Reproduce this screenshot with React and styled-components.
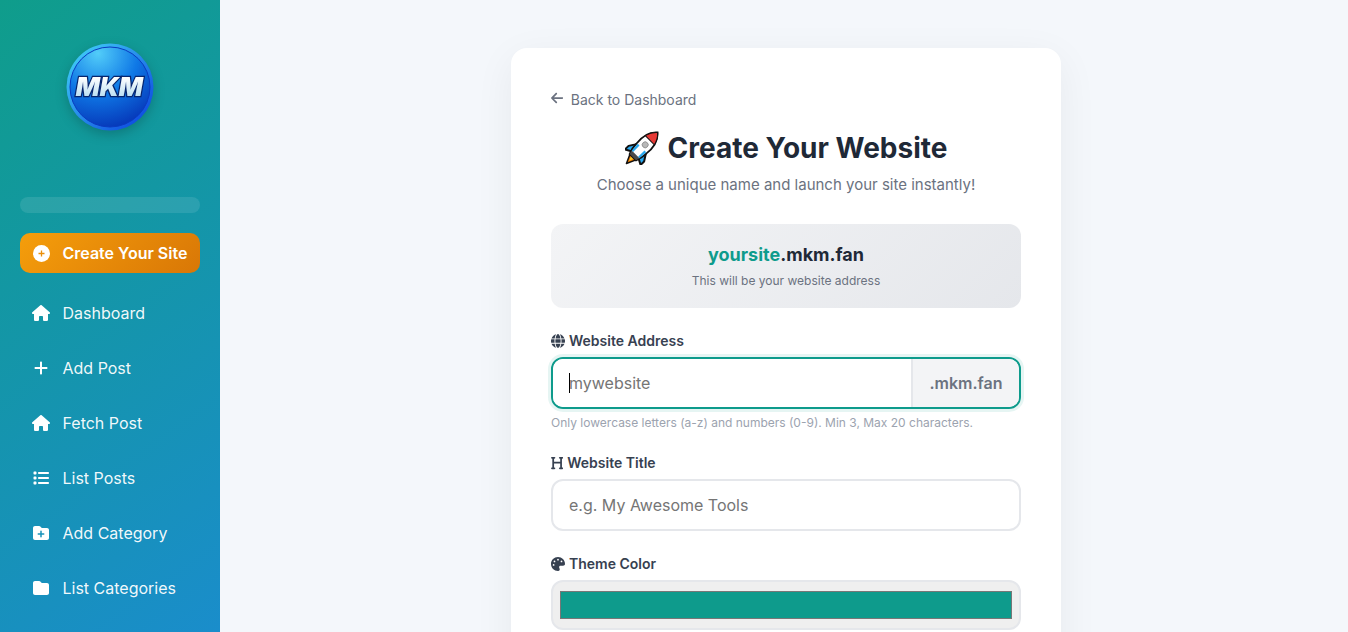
import React from "react";
import styled, { createGlobalStyle } from "styled-components";
import {
  FaArrowLeft,
  FaFolder,
  FaFolderPlus,
  FaGlobe,
  FaHeading,
  FaHouse,
  FaList,
  FaPalette,
  FaPlus,
} from "react-icons/fa6";

const GlobalStyle = createGlobalStyle`
  html, body {
    margin: 0;
    height: 100%;
    overflow: hidden;
  }
  * {
    box-sizing: border-box;
  }
  body {
    font-family: "Inter", "Liberation Sans", sans-serif;
    background: #f4f7fb;
  }
`;

const Layout = styled.div`
  display: flex;
  height: 100vh;
  overflow: hidden;
`;

const Sidebar = styled.aside`
  width: 220px;
  flex-shrink: 0;
  padding: 42px 20px 0;
  background: linear-gradient(145deg, #0f9d8b 0%, #1a8dcb 100%);
  display: flex;
  flex-direction: column;
`;

const LogoWrap = styled.div`
  display: flex;
  justify-content: center;
  height: 90px;
  margin-bottom: 65px;

  svg {
    filter: drop-shadow(0 4px 6px rgba(0, 0, 0, 0.2));
  }
`;

const SearchStub = styled.div`
  height: 16px;
  border-radius: 8px;
  background: rgba(255, 255, 255, 0.1);
  margin-bottom: 20px;
`;

const CreateButton = styled.a`
  height: 40px;
  display: flex;
  align-items: center;
  gap: 12.5px;
  padding: 0 13px;
  border-radius: 10px;
  color: #fff;
  font-size: 16px;
  font-weight: 600;
  white-space: nowrap;
  background: linear-gradient(135deg, #f59e0b, #d97706);
  margin-bottom: 12px;

  svg {
    flex-shrink: 0;
  }
`;

const NavList = styled.nav`
  display: flex;
  flex-direction: column;
`;

const NavItem = styled.a`
  height: 55px;
  display: flex;
  align-items: center;
  padding-left: 11px;
  color: rgba(255, 255, 255, 0.95);
  font-size: 16px;
  font-weight: 400;
`;

const NavIcon = styled.span`
  width: 20px;
  margin-right: 11.5px;
  display: flex;
  justify-content: center;
  color: #fff;

  svg {
    width: ${(props) => props.$width || 16}px;
    height: 16px;
  }
`;

const Main = styled.main`
  flex: 1;
  display: flex;
  justify-content: center;
  padding-top: 48px;
  padding-left: 4px;
`;

const Card = styled.section`
  width: 550px;
  height: 800px;
  flex-shrink: 0;
  background: #fff;
  border-radius: 16px;
  padding: 39px 40px 40px;
  box-shadow: 0 10px 40px rgba(0, 0, 0, 0.06);
`;

const BackLink = styled.a`
  display: flex;
  align-items: center;
  gap: 8px;
  height: 24px;
  color: #6b7280;
  font-size: 14px;
  margin-bottom: 17px;

  svg {
    width: 12.25px;
    height: 14px;
    margin-left: -0.5px;
    margin-top: -2px;
  }
`;

const Title = styled.h1`
  margin: 0 0 6px;
  height: 40px;
  display: flex;
  justify-content: center;
  align-items: center;
  gap: 9px;
  color: #1f2937;
  font-size: 28px;
  font-weight: 700;
  line-height: 40px;
`;

const Subtitle = styled.p`
  margin: 0 0 28px;
  text-align: center;
  color: #6b7280;
  font-size: 15px;
  line-height: 22px;
`;

const Preview = styled.div`
  height: 84px;
  border-radius: 12px;
  background: linear-gradient(135deg, #f3f4f6, #e5e7eb);
  display: flex;
  flex-direction: column;
  align-items: center;
  padding-top: 19px;
  margin-bottom: 24px;
`;

const PreviewName = styled.div`
  color: #1f2937;
  font-size: 18px;
  font-weight: 700;
  line-height: 24px;
  margin-bottom: 6px;
`;

const PreviewSub = styled.span`
  color: ${(props) => props.$accent || "inherit"};
`;

const PreviewHint = styled.div`
  color: #6b7280;
  font-size: 12px;
  line-height: 16px;
`;

const Field = styled.div`
  margin-bottom: ${(props) => props.$gap || 24}px;
`;

const Label = styled.label`
  display: flex;
  align-items: center;
  gap: 4px;
  height: 17px;
  margin-bottom: 8px;
  color: #374151;
  font-size: 14px;
  font-weight: 600;

  svg {
    width: ${(props) => props.$iconWidth || 14}px;
    height: 14px;
  }
`;

const AddressGroup = styled.div`
  position: relative;
  display: flex;
  height: 52px;
  border: 2px solid #0e9b8c;
  border-radius: 12px;
  overflow: hidden;
  box-shadow: 0 0 0 3px rgba(14, 155, 140, 0.1);
`;

const AddressInput = styled.input`
  flex: 1;
  min-width: 0;
  border: 0;
  outline: 0;
  padding: 0 16px;
  font-family: inherit;
  font-size: 16px;
  color: #1f2937;
  caret-color: transparent;
`;

const Caret = styled.span`
  position: absolute;
  left: 16px;
  top: 14px;
  width: 1px;
  height: 20px;
  background: #000;
`;

const Suffix = styled.div`
  width: 108px;
  display: flex;
  align-items: center;
  justify-content: center;
  background: #f3f4f6;
  border-left: 2px solid #e5e7eb;
  color: #6b7280;
  font-size: 16px;
  font-weight: 600;
`;

const Hint = styled.div`
  margin-top: 6px;
  color: #9ca3af;
  font-size: 12px;
  line-height: 16px;
`;

const TextInput = styled.input`
  display: block;
  width: 100%;
  height: 52px;
  border: 2px solid #e5e7eb;
  border-radius: 12px;
  outline: 0;
  padding: 0 16px;
  font-family: inherit;
  font-size: 16px;
  color: #1f2937;
`;

const ColorInput = styled.input`
  display: block;
  width: 100%;
  height: 50px;
  padding: 5px;
  border: 2px solid #e5e7eb;
  border-radius: 12px;
  background: #efefef;
`;

const navItems = [
  { label: "Dashboard", icon: <FaHouse />, width: 18 },
  { label: "Add Post", icon: <FaPlus />, width: 14 },
  { label: "Fetch Post", icon: <FaHouse />, width: 18 },
  { label: "List Posts", icon: <FaList /> },
  { label: "Add Category", icon: <FaFolderPlus /> },
  { label: "List Categories", icon: <FaFolder /> },
];

const CirclePlus = () => (
  <svg width="17" height="17" viewBox="0 0 17 17">
    <circle cx="8.500" cy="8.500" r="8.500" fill="#fff" />
    <path d="M8.500 5.500v6M5.500 8.500h6" stroke="#ea8f0a" strokeWidth="1.300" />
  </svg>
);

const Logo = () => (
  <svg width="90" height="90" viewBox="0 0 90 90">
    <defs>
      <linearGradient id="coinRim" x1="0.1" y1="0.1" x2="0.9" y2="0.9">
        <stop offset="0" stopColor="#3fcaf6" />
        <stop offset="1" stopColor="#0d4ae0" />
      </linearGradient>
      <radialGradient id="coinFace" cx="0.35" cy="0.08" r="1">
        <stop offset="0" stopColor="#52cdf9" />
        <stop offset="0.5" stopColor="#0f78e6" />
        <stop offset="1" stopColor="#0531b4" />
      </radialGradient>
      <linearGradient id="coinText" x1="0" y1="0" x2="0" y2="1">
        <stop offset="0.2" stopColor="#ffffff" />
        <stop offset="1" stopColor="#a9d6ee" />
      </linearGradient>
    </defs>
    <circle cx="45" cy="45" r="43.500" fill="url(#coinRim)" />
    <circle cx="45" cy="45" r="40" fill="url(#coinFace)" stroke="#0a3bc0" strokeWidth="1" />
    <text
      x="45"
      y="54"
      transform="skewX(-10) translate(7.500 0)"
      textAnchor="middle"
      fontFamily="Inter, 'Liberation Sans', sans-serif"
      fontSize="26"
      fontWeight="900"
      textLength="67"
      lengthAdjust="spacingAndGlyphs"
      fill="url(#coinText)"
      stroke="#06256e"
      strokeWidth="2.600"
      paintOrder="stroke"
    >
      MKM
    </text>
  </svg>
);

const Rocket = () => (
  <svg width="34" height="34" viewBox="0 0 34 34">
    <g transform="rotate(45 17 17)">
      <path d="M12.500 29 17 39l4.500-10z" fill="#f57c00" stroke="#111" strokeWidth="1.500" strokeLinejoin="round" />
      <path d="M15 30l2 5.500 2-5.500z" fill="#ffca28" />
      <path d="M10.500 18 6 25v5l6.500-3.500z" fill="#29a9f0" stroke="#111" strokeWidth="2" strokeLinejoin="round" />
      <path d="M23.500 18 28 25v5l-6.500-3.500z" fill="#29a9f0" stroke="#111" strokeWidth="2" strokeLinejoin="round" />
      <path
        d="M17-5c7 6 8 15 7 23 0 4-1 8-2.500 12h-9C11 26 10 22 10 18 9 10 10 1 17-5z"
        fill="#fff"
        stroke="#111"
        strokeWidth="1.800"
      />
      <path d="M17-5c3.500 3 5.500 7 6.400 11H10.600C11.500 2 13.500-2 17-5z" fill="#e53935" stroke="#111" strokeWidth="1" />
      <path d="M12.500 30h9l1-4h-11z" fill="#4a4a4a" />
      <path d="M11 17h2.500v9h-2zM20.500 17H23l-.5 9h-2z" fill="#29a9f0" />
      <circle cx="17" cy="12.500" r="3" fill="#b8b8b8" stroke="#8a8a8a" strokeWidth="0.800" />
    </g>
  </svg>
);

const App = () => {
  return (
    <Layout>
      <GlobalStyle />
      <Sidebar>
        <LogoWrap>
          <Logo />
        </LogoWrap>
        <SearchStub />
        <CreateButton>
          <CirclePlus />
          Create Your Site
        </CreateButton>
        <NavList>
          {navItems.map((item) => (
            <NavItem key={item.label}>
              <NavIcon $width={item.width}>{item.icon}</NavIcon>
              {item.label}
            </NavItem>
          ))}
        </NavList>
      </Sidebar>
      <Main>
        <Card>
          <BackLink>
            <FaArrowLeft />
            Back to Dashboard
          </BackLink>
          <Title>
            <Rocket />
            Create Your Website
          </Title>
          <Subtitle>Choose a unique name and launch your site instantly!</Subtitle>
          <Preview>
            <PreviewName>
              <PreviewSub $accent="#0e9b8c">yoursite</PreviewSub>.mkm.fan
            </PreviewName>
            <PreviewHint>This will be your website address</PreviewHint>
          </Preview>
          <Field $gap={23}>
            <Label>
              <FaGlobe />
              Website Address
            </Label>
            <AddressGroup>
              <AddressInput placeholder="mywebsite" autoFocus />
              <Caret />
              <Suffix>.mkm.fan</Suffix>
            </AddressGroup>
            <Hint>Only lowercase letters (a-z) and numbers (0-9). Min 3, Max 20 characters.</Hint>
          </Field>
          <Field>
            <Label $iconWidth={12.25}>
              <FaHeading />
              Website Title
            </Label>
            <TextInput placeholder="e.g. My Awesome Tools" />
          </Field>
          <Field>
            <Label>
              <FaPalette />
              Theme Color
            </Label>
            <ColorInput type="color" defaultValue="#0e9b8c" />
          </Field>
        </Card>
      </Main>
    </Layout>
  );
};

export default App;
